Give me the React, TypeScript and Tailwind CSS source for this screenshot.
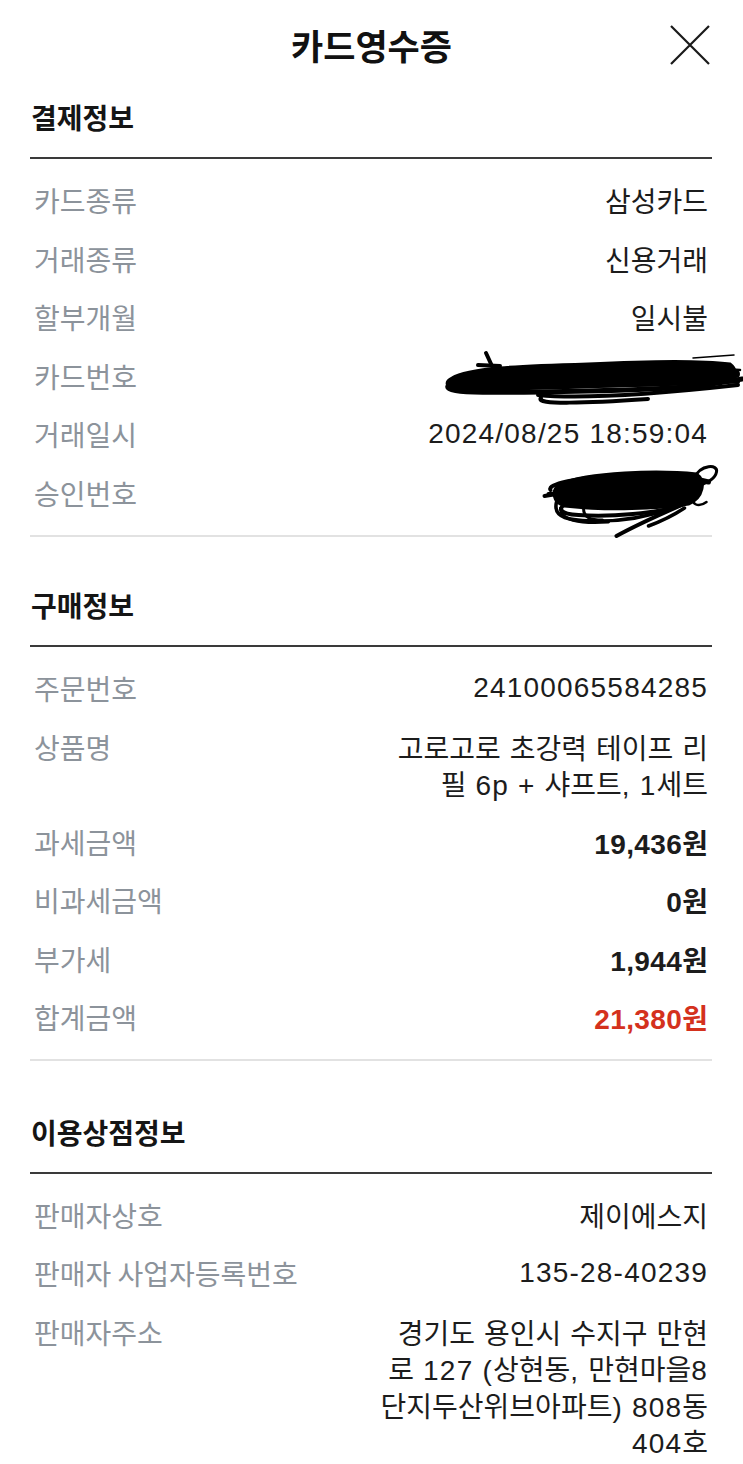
import React from "react";

const KR = "font-['Noto_Sans_CJK_KR',sans-serif]";

function Mixed({ s, bold }: { s: string; bold?: boolean }) {
  const parts = s.split(/([\u3131-\uD7A3]+)/).filter((p) => p.length > 0);
  return (
    <>
      {parts.map((p, i) =>
        /[\u3131-\uD7A3]/.test(p) ? (
          <span key={i} className="text-[28px]">
            {p}
          </span>
        ) : (
          <span
            key={i}
            className={`font-['Liberation_Sans',sans-serif] text-[28px] ${bold ? "font-bold tracking-[0.4px]" : "tracking-[1.2px]"}`}
          >
            {p}
          </span>
        )
      )}
    </>
  );
}

type RowProps = {
  label: string;
  lines?: string[];
  bold?: boolean;
  red?: boolean;
  children?: React.ReactNode;
};

function Row({ label, lines, bold, red, children }: RowProps) {
  return (
    <div className="relative flex items-start justify-between px-[4px] py-[11px] leading-[36.5px]">
      <div className="h-[36.5px] whitespace-nowrap text-[28px] text-[#8c939b]">{label}</div>
      {children ?? (
        <div
          className={`text-right ${bold ? "font-bold" : "font-normal"} ${red ? "text-[#d4311d]" : "text-[#1c1c1c]"}`}
        >
          {lines!.map((l, i) => (
            <div key={i} className="h-[36.5px] whitespace-nowrap">
              <Mixed s={l} bold={bold} />
            </div>
          ))}
        </div>
      )}
    </div>
  );
}

function SectionTitle({ text, pt }: { text: string; pt: string }) {
  return (
    <div className={`${pt}`}>
      <h2 className="h-[36px] pl-[1px] text-[28px] font-bold leading-[36px] text-[#151515]">{text}</h2>
      <div className="h-[22px]" />
      <div className="h-[2px] bg-[#3a3a3a]" />
    </div>
  );
}

function ScribbleCard() {
  return (
    <svg
      width="305"
      height="62"
      viewBox="0 0 305 62"
      className="absolute right-[-31px] top-[1px]"
      fill="none"
      stroke="#000"
      strokeLinecap="round"
    >
      <path
        d="M14 30 C 30 20, 80 18, 150 16 C 210 13, 260 12, 292 16 C 300 22, 298 30, 290 34 C 220 37, 120 40, 20 42 C 8 40, 6 34, 14 30 Z"
        fill="#000"
        strokeWidth="3"
      />
      <path d="M10 38 C 6 46, 60 45, 150 43 S 260 39, 304 31" strokeWidth="5" />
      <path d="M30 40 C 90 38, 160 38, 230 36 S 290 33, 300 34" strokeWidth="4" />
      <path d="M100 47 C 140 51, 200 48, 300 37" strokeWidth="4" />
      <path d="M103 50 C 96 57, 150 55, 210 51" strokeWidth="4" />
      <path d="M48 5 L54 18" strokeWidth="4" />
      <path d="M40 17 L62 18" strokeWidth="4" />
      <path d="M255 10 L296 7" strokeWidth="1.5" />
      <path d="M270 20 L302 22" strokeWidth="2.5" />
      <path d="M40 33 C 100 30, 200 28, 298 26" strokeWidth="8" />
    </svg>
  );
}

function ScribbleApproval() {
  return (
    <svg
      width="188"
      height="82"
      viewBox="0 0 185 82"
      className="absolute right-[-13px] top-[-6px]"
      fill="none"
      stroke="#000"
      strokeLinecap="round"
    >
      <path
        d="M22 26 C 50 14, 120 12, 158 16 C 168 22, 165 40, 150 46 C 110 52, 60 52, 26 48 C 14 44, 12 32, 22 26 Z"
        fill="#000"
        strokeWidth="3"
      />
      <path d="M12 32 C 8 26, 40 20, 70 18" strokeWidth="4" />
      <path d="M10 36 C 40 34, 60 36, 30 44 C 18 50, 20 56, 40 57 C 70 59, 120 56, 146 46" strokeWidth="4" />
      <path d="M18 44 C 14 60, 30 63, 60 63 C 90 63, 112 58, 134 50" strokeWidth="3.5" />
      <path d="M22 50 C 22 62, 40 66, 70 64" strokeWidth="3" />
      <path d="M45 50 C 45 60, 52 62, 64 62" strokeWidth="3" />
      <path d="M150 44 C 120 57, 98 67, 78 78" strokeWidth="4" />
      <path d="M146 50 C 134 58, 126 62, 110 68" strokeWidth="3.5" />
      <path d="M156 20 C 162 6, 180 6, 178 14 C 176 24, 162 26, 156 30" strokeWidth="3" />
      <path d="M158 38 C 150 46, 160 50, 168 44" strokeWidth="2.5" />
      <path d="M18 36 L6 38" strokeWidth="4" />
      <path d="M60 22 C 100 16, 140 16, 170 24" strokeWidth="5" />
    </svg>
  );
}

export default function App() {
  return (
    <div className={`min-h-[1464px] w-[743px] bg-white ${KR}`}>
      {/* header */}
      <div className="grid h-[90px] grid-cols-[1fr_auto_1fr] items-center px-[30px]">
        <div />
        <h1 className="-mt-[1px] text-[35px] font-bold leading-none text-[#111]">카드영수증</h1>
        <div className="flex justify-end pr-[2px]">
          <svg width="42" height="42" viewBox="0 0 42 42" stroke="#1a1a1a" strokeWidth="2.2" fill="none">
            <path d="M2 2 L40 40 M40 2 L2 40" />
          </svg>
        </div>
      </div>

      <div className="px-[30px] pr-[31px]">
        {/* 결제정보 */}
        <SectionTitle text="결제정보" pt="pt-[9px]" />
        <div className="pb-[13px] pt-[12px]">
          <Row label="카드종류" lines={["삼성카드"]} />
          <Row label="거래종류" lines={["신용거래"]} />
          <Row label="할부개월" lines={["일시불"]} />
          <Row label="카드번호">
            <ScribbleCard />
          </Row>
          <Row label="거래일시" lines={["2024/08/25 18:59:04"]} />
          <Row label="승인번호">
            <ScribbleApproval />
          </Row>
        </div>
        <div className="h-[2px] bg-[#e2e2e2]" />

        {/* 구매정보 */}
        <SectionTitle text="구매정보" pt="pt-[50px]" />
        <div className="pb-[12px] pt-[12px]">
          <Row label="주문번호" lines={["24100065584285"]} />
          <Row label="상품명" lines={["고로고로 초강력 테이프 리", "필 6p + 샤프트, 1세트"]} />
          <Row label="과세금액" lines={["19,436원"]} bold />
          <Row label="비과세금액" lines={["0원"]} bold />
          <Row label="부가세" lines={["1,944원"]} bold />
          <Row label="합계금액" lines={["21,380원"]} bold red />
        </div>
        <div className="h-[2px] bg-[#e2e2e2]" />

        {/* 이용상점정보 */}
        <SectionTitle text="이용상점정보" pt="pt-[53px]" />
        <div className="pt-[12px]">
          <Row label="판매자상호" lines={["제이에스지"]} />
          <Row label="판매자 사업자등록번호" lines={["135-28-40239"]} />
          <Row
            label="판매자주소"
            lines={["경기도 용인시 수지구 만현", "로 127 (상현동, 만현마을8", "단지두산위브아파트) 808동", "404호"]}
          />
        </div>
      </div>
    </div>
  );
}
